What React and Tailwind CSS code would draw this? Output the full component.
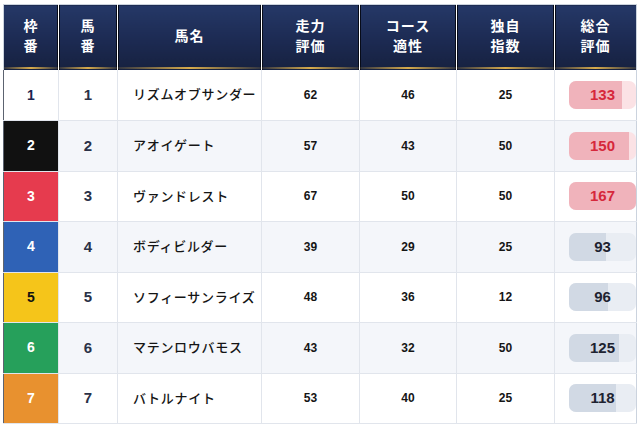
import React from 'react';

const FONT = { fontFamily: '"Liberation Sans", "Noto Sans CJK JP", Arial, sans-serif' };

const horses = [
  { waku: 1, uma: 1, name: 'リズムオブサンダー', run: 62, course: 46, own: 25, total: 133 },
  { waku: 2, uma: 2, name: 'アオイゲート', run: 57, course: 43, own: 50, total: 150 },
  { waku: 3, uma: 3, name: 'ヴァンドレスト', run: 67, course: 50, own: 50, total: 167 },
  { waku: 4, uma: 4, name: 'ボディビルダー', run: 39, course: 29, own: 25, total: 93 },
  { waku: 5, uma: 5, name: 'ソフィーサンライズ', run: 48, course: 36, own: 12, total: 96 },
  { waku: 6, uma: 6, name: 'マテンロウバモス', run: 43, course: 32, own: 50, total: 125 },
  { waku: 7, uma: 7, name: 'バトルナイト', run: 53, course: 40, own: 25, total: 118 },
];

const wakuStyle = {
  1: 'bg-white text-[#1c2550]',
  2: 'bg-[#111111] text-white',
  3: 'bg-[#e63b4e] text-white',
  4: 'bg-[#2f62b6] text-white',
  5: 'bg-[#f5c51a] text-[#111]',
  6: 'bg-[#26a05b] text-white',
  7: 'bg-[#e8912f] text-white',
};

const cols = [
  { label: ['枠', '番'], w: 'w-[55px]' },
  { label: ['馬', '番'], w: 'w-[59px]' },
  { label: ['馬名'], w: 'w-[144px]' },
  { label: ['走力', '評価'], w: 'w-[98px]' },
  { label: ['コース', '適性'], w: 'w-[97px]' },
  { label: ['独自', '指数'], w: 'w-[98px]' },
  { label: ['総合', '評価'], w: 'w-[82px]' },
];

// ====== Header cell ======
function HeadCell({ label, w, first, last }) {
  const edge = first
    ? 'shadow-[inset_-1px_0_0_#070b18]'
    : last
    ? 'border-l border-white shadow-[inset_1px_0_0_#070b18]'
    : 'border-l border-white shadow-[inset_1px_0_0_#070b18,inset_-1px_0_0_#070b18]';
  return (
    <th className={`${w} p-0 bg-[linear-gradient(180deg,#253867_0%,#1c2a52_55%,#16213f_100%)] ${edge}`}>
      <div className="h-[65px] flex flex-col">
        <div className="flex-1 flex flex-col items-center justify-center text-white font-bold text-[14px] leading-[20px] tracking-[1px]">
          {label.map((l) => (
            <span key={l}>{l}</span>
          ))}
        </div>
        <div className="h-[2px] mb-[1px] bg-[linear-gradient(90deg,rgba(201,162,74,0.15),#d8ac4c,rgba(201,162,74,0.15))]" />
      </div>
    </th>
  );
}

// ====== Score pill ======
function ScorePill({ value, top }) {
  const pct = Math.min(100, (value / 167) * 100);
  return (
    <div className={`relative ml-[14px] w-[67px] h-[28px] rounded-[7px] overflow-hidden ${top ? 'bg-[#fbe2e5]' : 'bg-[#e9edf3]'}`}>
      <div
        className={`absolute inset-y-0 left-0 ${top ? 'bg-[#f0b3bb]' : 'bg-[#d1d9e4]'}`}
        style={{ width: `${pct}%` }}
      />
      <div className={`relative h-full flex items-center justify-center font-bold text-[15px] ${top ? 'text-[#d6283b]' : 'text-[#1d2230]'}`}>
        {value}
      </div>
    </div>
  );
}

export default function App() {
  const tops = [...horses].sort((a, b) => b.total - a.total).slice(0, 3).map((h) => h.uma);
  return (
    <div className="w-[640px] h-[428px] bg-white pt-[4px] pl-[3px]" style={FONT}>
      <table className="w-[633px] table-fixed border-collapse border border-[#cbd3de]">
        <thead>
          <tr>
            {cols.map((c, i) => (
              <HeadCell key={i} {...c} first={i === 0} last={i === cols.length - 1} />
            ))}
          </tr>
        </thead>
        <tbody>
          {horses.map((h, i) => (
            <tr key={h.uma} className={i % 2 ? 'bg-[#f4f6fa]' : 'bg-white'}>
              <td className={`h-[50.5px] p-0 text-center font-bold text-[14px] border-b border-[#e1e5ec] border-l-[#5c6370] border-l ${wakuStyle[h.waku]}`}>
                {h.waku}
              </td>
              <td className="p-0 text-center font-bold text-[15px] text-[#2a3147] border-b border-l border-[#e1e5ec]">
                {h.uma}
              </td>
              <td className="p-0 pl-[15px] text-left text-[13px] font-medium tracking-[0.7px] text-[#151515] border-b border-l border-[#e1e5ec] whitespace-nowrap">
                {h.name}
              </td>
              <td className="p-0 text-center font-bold text-[12px] text-[#151515] border-b border-l border-[#e1e5ec]">{h.run}</td>
              <td className="p-0 text-center font-bold text-[12px] text-[#151515] border-b border-l border-[#e1e5ec]">{h.course}</td>
              <td className="p-0 text-center font-bold text-[12px] text-[#151515] border-b border-l border-[#e1e5ec]">{h.own}</td>
              <td className="p-0 border-b border-l border-[#e1e5ec]">
                <ScorePill value={h.total} top={tops.includes(h.uma)} />
              </td>
            </tr>
          ))}
        </tbody>
      </table>
    </div>
  );
}
